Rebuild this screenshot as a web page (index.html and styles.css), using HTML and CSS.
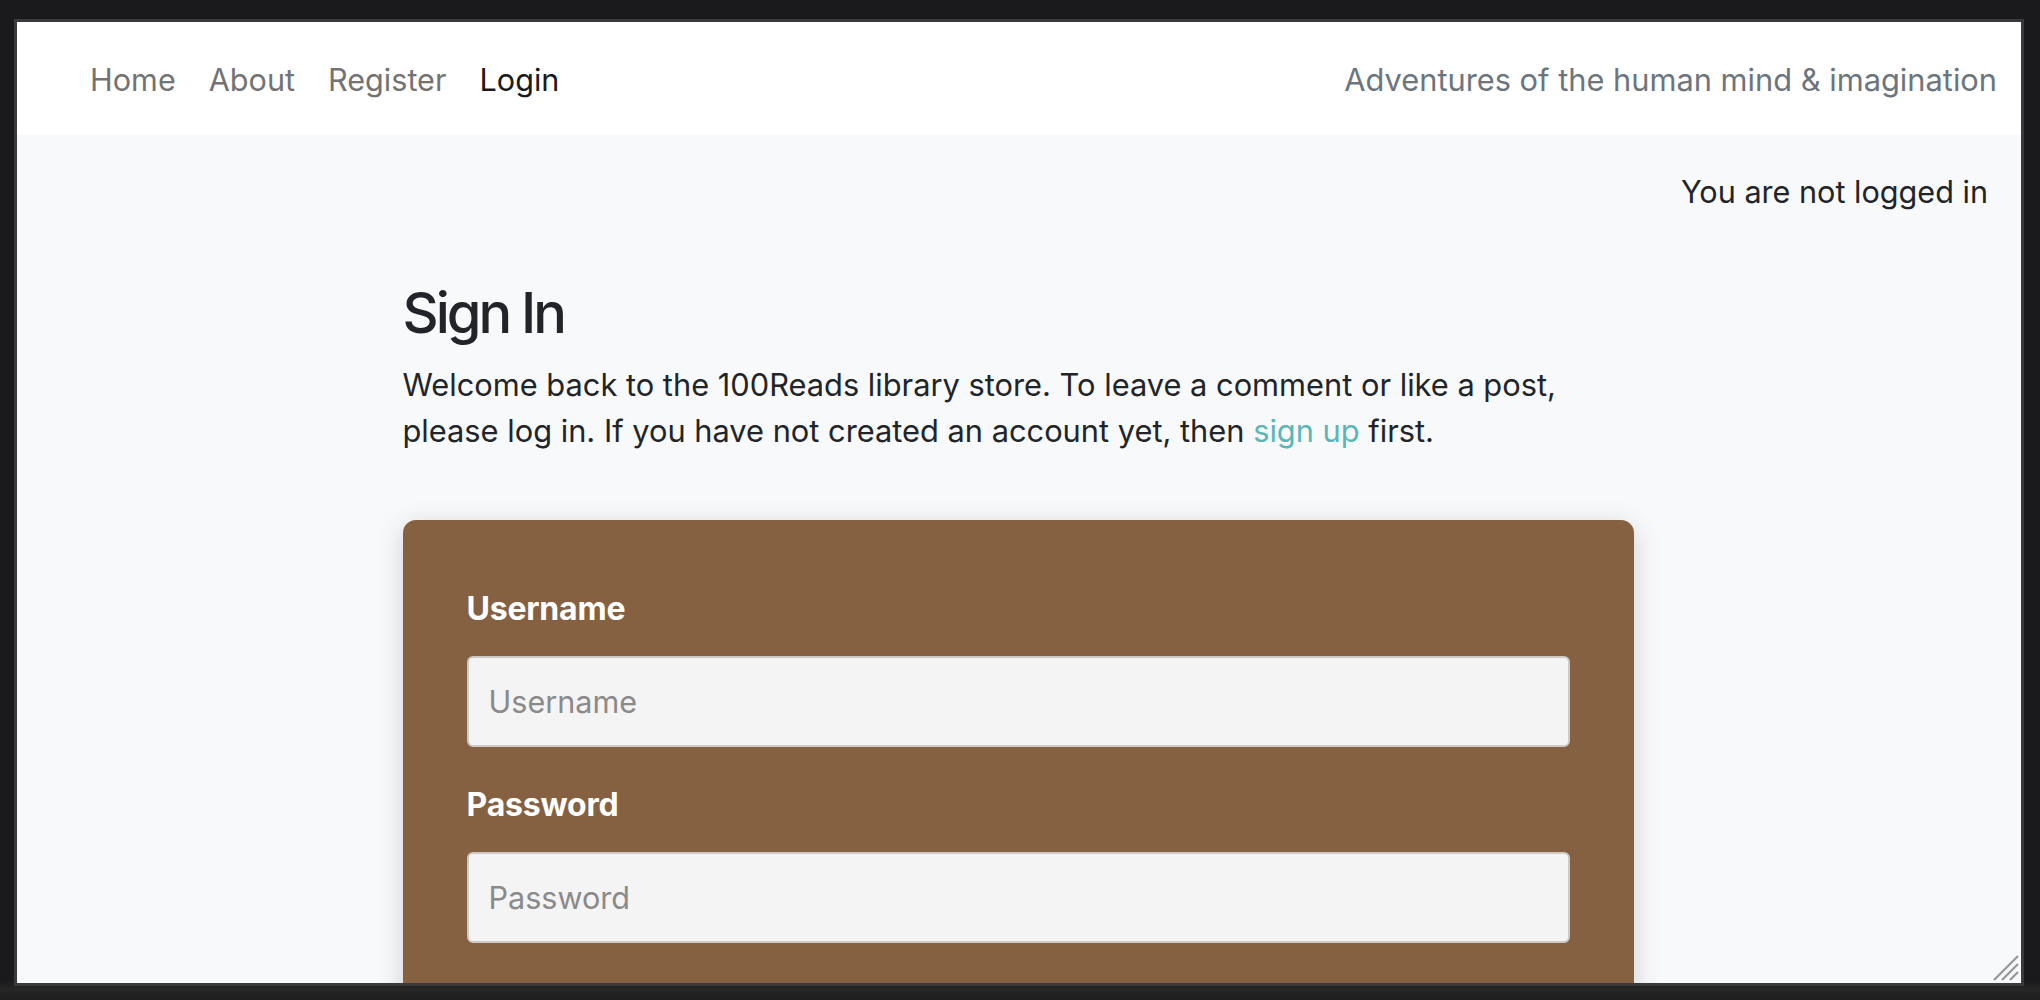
FILE: index.html
```html
<!DOCTYPE html>
<html lang="en">
<head>
<meta charset="utf-8">
<title>Sign In - 100Reads</title>
<link rel="stylesheet" href="styles.css">
</head>
<body>
<div class="window">
  <nav class="navbar">
    <ul class="nav-links">
      <li><a class="nav-link" href="#">Home</a></li>
      <li><a class="nav-link" href="#">About</a></li>
      <li><a class="nav-link" href="#">Register</a></li>
      <li><a class="nav-link active" href="#">Login</a></li>
    </ul>
    <span class="tagline">Adventures of the human mind &amp; imagination</span>
  </nav>
  <main class="main">
    <p class="status">You are not logged in</p>
    <section class="column">
      <h2 class="title">Sign In</h2>
      <p class="intro">Welcome back to the 100Reads library store. To leave a comment or like a post, please log in. If you have not created an account yet, then <a class="link" href="#">sign up</a> first.</p>
      <form class="card">
        <div class="field">
          <label class="label" for="username">Username</label>
          <input class="input" id="username" type="text" placeholder="Username">
        </div>
        <div class="field">
          <label class="label" for="password">Password</label>
          <input class="input" id="password" type="password" placeholder="Password">
        </div>
      </form>
    </section>
  </main>
  <svg class="grip" width="28" height="28" viewBox="0 0 28 28">
    <path d="M27 3 L3 27 M27 11 L11 27 M27 19 L19 27" stroke="#9a9a9a" stroke-width="2.4" fill="none"/>
  </svg>
</div>
</body>
</html>
```
FILE: styles.css
```css
* { box-sizing: border-box; }

html, body {
  margin: 0;
  padding: 0;
  height: 100%;
}

body {
  background: linear-gradient(#1a1a1c 0, #1a1a1c 980px, #262626 990px, #1e1e1e 1000px);
  font-family: Inter, "Noto Sans", sans-serif;
  overflow: hidden;
}

.window {
  position: relative;
  margin: 19px 0 0 14px;
  width: 2010px;
  height: 967px;
  border: 3px solid #3a3a3c;
  background: #f8f9fa;
  overflow: hidden;
}

.navbar {
  height: 113px;
  background: #ffffff;
  display: flex;
  align-items: center;
  justify-content: space-between;
  padding: 2px 24px 0 73px;
}

.nav-links {
  list-style: none;
  margin: 0;
  padding: 0;
  display: flex;
  gap: 33px;
}

.nav-link {
  font-size: 30.6px;
  color: #737373;
  text-decoration: none;
  line-height: 46px;
}

.nav-link.active {
  color: #1a1a1a;
}

.tagline {
  font-size: 30.8px;
  color: #6c757d;
  line-height: 46px;
}

.main {
  padding: 34px 33px 0 33px;
}

.status {
  margin: 0;
  text-align: right;
  font-size: 30.6px;
  line-height: 46px;
  color: #212529;
}

.column {
  width: 1231px;
  margin: 62px auto 0;
  position: relative;
  left: -1px;
}

.title {
  margin: 0 0 13px;
  font-size: 56px;
  font-weight: 500;
  line-height: 72px;
  color: #212529;
  letter-spacing: -3px;
}

.intro {
  margin: 0 0 66px;
  font-size: 30.8px;
  line-height: 46px;
  color: #212529;
}

.link {
  color: #5ab6b9;
  text-decoration: none;
}

.card {
  background: #856142;
  border-radius: 13px;
  box-shadow: 0 6px 28px rgba(0, 0, 0, 0.16);
  padding: 66px 64px 120px;
  display: flex;
  flex-direction: column;
  gap: 35px;
}

.field {
  display: flex;
  flex-direction: column;
  gap: 24px;
}

.label {
  font-size: 32px;
  font-weight: 700;
  line-height: 46px;
  color: #ffffff;
  letter-spacing: -0.2px;
}

.input {
  height: 91px;
  width: 100%;
  border: 2px solid #cdc9c5;
  border-radius: 6px;
  background: #f4f4f4;
  padding: 0 20px;
  font-family: Inter, "Noto Sans", sans-serif;
  font-size: 30.6px;
  color: #212529;
}

.input::placeholder {
  color: #8a8a8a;
}

.grip {
  position: absolute;
  right: 2px;
  bottom: 2px;
}
```
